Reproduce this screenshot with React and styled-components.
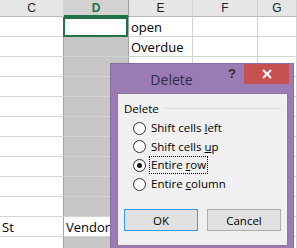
import React from 'react';
import styled, { createGlobalStyle } from 'styled-components';

const GlobalStyle = createGlobalStyle`
  html, body {
    margin: 0;
    padding: 0;
    background: #ffffff;
    overflow: hidden;
  }
`;

const Screen = styled.div`
  position: relative;
  width: 297px;
  height: 248px;
  overflow: hidden;
  font-family: 'Open Sans', 'Liberation Sans', sans-serif;
`;

const Sheet = styled.div`
  display: grid;
  grid-template-columns: 64px 65px 64px 65px 1fr;
  grid-auto-rows: 20px;
  grid-template-rows: 17px;
`;

const HeaderCell = styled.div`
  box-sizing: border-box;
  display: flex;
  align-items: center;
  justify-content: center;
  background: ${(p) => (p.$selected ? '#d2d2d2' : '#e6e6e6')};
  border-right: 1px solid ${(p) => (p.$selected ? '#9f9f9f' : '#d0d0d0')};
  border-bottom: ${(p) => (p.$selected ? '2px solid #217346' : '1px solid #b8b8b8')};
  color: ${(p) => (p.$selected ? '#217346' : '#222222')};
  font-family: 'Liberation Sans', Arial, sans-serif;
  font-weight: ${(p) => (p.$selected ? 700 : 400)};
  font-size: 12px;
`;

const Cell = styled.div`
  box-sizing: border-box;
  position: relative;
  display: flex;
  align-items: center;
  padding-left: 2px;
  background: ${(p) => (p.$shaded ? '#c6c6c6' : '#ffffff')};
  border-right: 1px solid ${(p) => (p.$edge ? '#a3a3a3' : '#d4d4d4')};
  border-bottom: 1px solid #d4d4d4;
  font-family: 'Open Sans', 'Liberation Sans', sans-serif;
  font-size: 13px;
  color: #000000;
  white-space: nowrap;
  overflow: visible;
`;

const ActiveFrame = styled.div`
  position: absolute;
  inset: 0 0 -1px -1px;
  border: 2px solid #217346;
  box-sizing: border-box;
  background: #ffffff;
`;

const Dialog = styled.div`
  position: absolute;
  left: 110px;
  top: 63px;
  width: 184px;
  height: 190px;
  box-sizing: border-box;
  background: #9b7bb3;
  border: 1px solid #8a6aa3;
  display: flex;
  flex-direction: column;
  padding: 0 5px 6px 6px;
`;

const TitleBar = styled.div`
  position: relative;
  height: 29px;
  display: flex;
  align-items: center;
  justify-content: center;
`;

const Title = styled.span`
  font-family: 'Open Sans', 'Liberation Sans', sans-serif;
  font-size: 14px;
  color: #2e2a45;
  margin-left: -62px;
  margin-top: 2px;
`;

const Help = styled.span`
  position: absolute;
  right: 52px;
  top: 2px;
  font-family: 'Liberation Sans', Arial, sans-serif;
  font-weight: 700;
  font-size: 13px;
  color: #2b2b2b;
`;

const Close = styled.div`
  position: absolute;
  right: -1px;
  top: 0;
  width: 45px;
  height: 20px;
  background: #c75050;
  display: flex;
  align-items: center;
  justify-content: center;
`;

const Client = styled.div`
  flex: 1;
  background: #f0f0f0;
  border: 1px solid #8c7a9a;
  padding: 6px 6px 0 6px;
  display: flex;
  flex-direction: column;
  font-family: 'Open Sans', 'Liberation Sans', sans-serif;
  font-size: 11.5px;
  color: #000000;
`;

const GroupHead = styled.div`
  display: flex;
  align-items: center;
  gap: 6px;
  height: 16px;

  &::after {
    content: '';
    flex: 1;
    height: 1px;
    background: #dcdcdc;
  }
`;

const Options = styled.div`
  display: flex;
  flex-direction: column;
  padding: 3px 0 0 9px;
`;

const Option = styled.div`
  display: flex;
  align-items: center;
  height: 18.6px;
  gap: 4px;
`;

const Radio = styled.span`
  box-sizing: border-box;
  width: 13px;
  height: 13px;
  border-radius: 50%;
  border: 1px solid #333333;
  background: #ffffff;
  display: flex;
  align-items: center;
  justify-content: center;

  &::after {
    content: '';
    width: 5px;
    height: 5px;
    border-radius: 50%;
    background: ${(p) => (p.$checked ? '#1a1a1a' : 'transparent')};
  }
`;

const Label = styled.span`
  padding: 0 1px;
  outline: ${(p) => (p.$focus ? '1px dotted #000000' : 'none')};
  line-height: 16px;
`;

const Buttons = styled.div`
  display: flex;
  justify-content: space-between;
  margin-top: 16px;
`;

const Button = styled.button`
  box-sizing: border-box;
  width: 74px;
  height: 22px;
  background: #e1e1e1;
  border: 1px solid ${(p) => (p.$default ? '#3399ff' : '#adadad')};
  font-family: 'Open Sans', 'Liberation Sans', sans-serif;
  font-size: 11.5px;
  color: #000000;
  padding: 0;
`;

const columns = ['C', 'D', 'E', 'F', 'G'];

const rows = [
  ['', '', 'open', '', ''],
  ['', '', 'Overdue', '', ''],
  ['', '', '', '', ''],
  ['', '', '', '', ''],
  ['', '', '', '', ''],
  ['', '', '', '', ''],
  ['', '', '', '', ''],
  ['', '', '', '', ''],
  ['', '', '', '', ''],
  ['', '', '', '', ''],
  ['St', 'Vendor', '', '', ''],
  ['', '', '', '', ''],
];

const options = [
  { pre: 'Shift cells ', key: 'l', post: 'eft' },
  { pre: 'Shift cells ', key: 'u', post: 'p' },
  { pre: 'Entire ', key: 'r', post: 'ow', checked: true },
  { pre: 'Entire ', key: 'c', post: 'olumn' },
];

const App = () => {
  return (
    <Screen>
      <GlobalStyle />
      <Sheet>
        {columns.map((c) => (
          <HeaderCell key={c} $selected={c === 'D'}>
            {c}
          </HeaderCell>
        ))}
        {rows.map((r, ri) =>
          r.map((v, ci) => {
            const isD = ci === 1;
            const white = isD && (ri === 0 || ri === 10);
            return (
              <Cell
                key={ri + '-' + ci}
                $shaded={isD && !white}
                $edge={isD || ci === 0}
              >
                {isD && ri === 0 && <ActiveFrame />}
                {v}
              </Cell>
            );
          })
        )}
      </Sheet>

      <Dialog>
        <TitleBar>
          <Title>Delete</Title>
          <Help>?</Help>
          <Close>
            <svg width="10" height="10" viewBox="0 0 10 10">
              <path d="M1 1 L9 9 M9 1 L1 9" stroke="#ffffff" strokeWidth="2" />
            </svg>
          </Close>
        </TitleBar>
        <Client>
          <GroupHead>Delete</GroupHead>
          <Options>
            {options.map((o, i) => (
              <Option key={i}>
                <Radio $checked={o.checked} />
                <Label $focus={o.checked}>
                  {o.pre}
                  <u>{o.key}</u>
                  {o.post}
                </Label>
              </Option>
            ))}
          </Options>
          <Buttons>
            <Button $default>OK</Button>
            <Button>Cancel</Button>
          </Buttons>
        </Client>
      </Dialog>
    </Screen>
  );
};

export default App;
